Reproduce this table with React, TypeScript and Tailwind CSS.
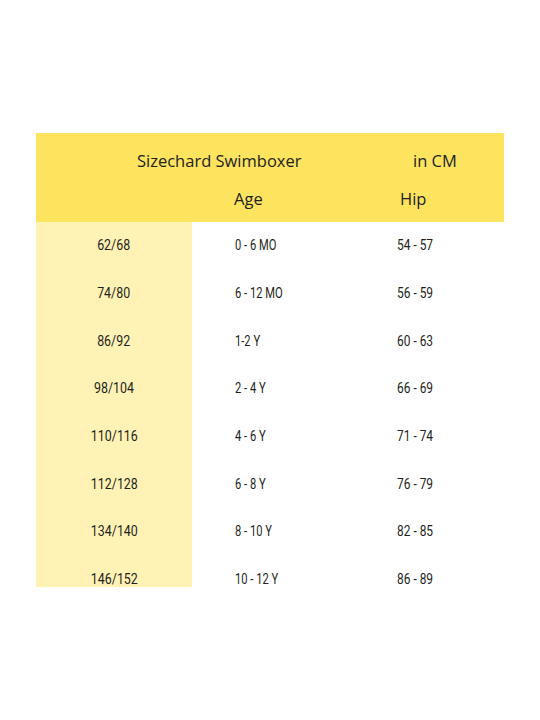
const rows = [
  { size: '62/68', age: '0 - 6 MO', hip: '54 - 57' },
  { size: '74/80', age: '6 - 12 MO', hip: '56 - 59' },
  { size: '86/92', age: '1-2 Y', hip: '60 - 63' },
  { size: '98/104', age: '2 - 4 Y', hip: '66 - 69' },
  { size: '110/116', age: '4 - 6 Y', hip: '71 - 74' },
  { size: '112/128', age: '6 - 8 Y', hip: '76 - 79' },
  { size: '134/140', age: '8 - 10 Y', hip: '82 - 85' },
  { size: '146/152', age: '10 - 12 Y', hip: '86 - 89' },
];

export default function App() {
  return (
    <div className="min-h-[720px] w-[540px] bg-white pt-[133px] text-[#231f20]">
      <div className="mx-auto w-[468px]">
        {/* Header */}
        <div className="h-[89px] bg-[#fde35e] font-['Open_Sans',sans-serif] text-[16.5px]">
          <div className="grid h-[56px] grid-cols-[318px_1fr] items-center">
            <span className="pl-[101px]">Sizechard Swimboxer</span>
            <span className="pl-[59px]">in CM</span>
          </div>
          <div className="grid h-[20px] grid-cols-[156px_162px_1fr] items-center leading-[20px]">
            <span></span>
            <span className="pl-[42px]">Age</span>
            <span className="pl-[46px]">Hip</span>
          </div>
        </div>

        {/* Rows */}
        <div className="font-['Roboto',sans-serif] text-[15.5px] font-normal">
          {rows.map((r, i) => {
            const last = i === rows.length - 1;
            return (
              <div key={r.size} className="grid h-[47.7px] grid-cols-[156px_162px_1fr] items-center">
                <div
                  className={
                    last
                      ? 'flex h-full items-center justify-center bg-[linear-gradient(to_bottom,#fff2b4_31px,transparent_31px)]'
                      : 'flex h-full items-center justify-center bg-[#fff2b4]'
                  }
                >
                  <span className="inline-block scale-x-[0.8]">{r.size}</span>
                </div>
                <div className="pl-[43px]">
                  <span className="inline-block origin-left scale-x-[0.72]">{r.age}</span>
                </div>
                <div className="pl-[43px]">
                  <span className="inline-block origin-left scale-x-[0.77]">{r.hip}</span>
                </div>
              </div>
            );
          })}
        </div>
      </div>
    </div>
  );
}
